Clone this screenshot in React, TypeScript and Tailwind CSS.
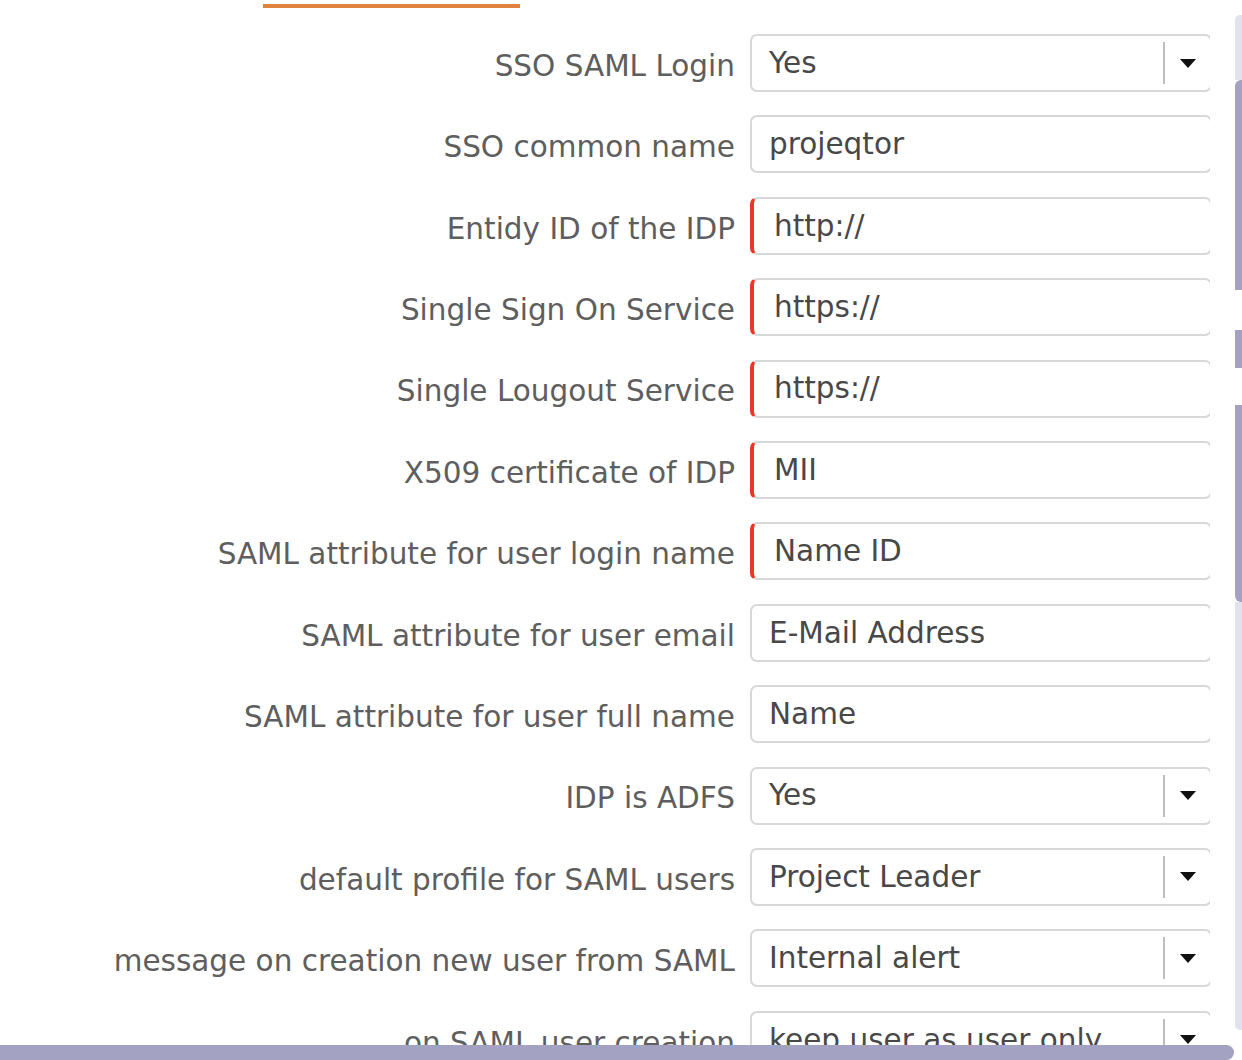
import React from "react";

type Field = {
  label: string;
  value: string;
  kind: "select" | "text";
  required?: boolean;
};

const fields: Field[] = [
  { label: "SSO SAML Login", value: "Yes", kind: "select" },
  { label: "SSO common name", value: "projeqtor", kind: "text" },
  { label: "Entidy ID of the IDP", value: "http://", kind: "text", required: true },
  { label: "Single Sign On Service", value: "https://", kind: "text", required: true },
  { label: "Single Lougout Service", value: "https://", kind: "text", required: true },
  { label: "X509 certificate of IDP", value: "MII", kind: "text", required: true },
  { label: "SAML attribute for user login name", value: "Name ID", kind: "text", required: true },
  { label: "SAML attribute for user email", value: "E-Mail Address", kind: "text" },
  { label: "SAML attribute for user full name", value: "Name", kind: "text" },
  { label: "IDP is ADFS", value: "Yes", kind: "select" },
  { label: "default profile for SAML users", value: "Project Leader", kind: "select" },
  { label: "message on creation new user from SAML", value: "Internal alert", kind: "select" },
  { label: "on SAML user creation", value: "keep user as user only", kind: "select" },
];

function Row({ f }: { f: Field }) {
  return (
    <div className="flex items-center h-[58px] shrink-0">
      <div className="w-[735px] shrink-0 text-right pt-[6px] text-[#5e5e5e] whitespace-nowrap">
        {f.label}
      </div>
      <div
        className={
          f.required
            ? "ml-[15px] w-[462px] h-[58px] shrink-0 flex items-center rounded-[7px] border-2 border-[#d8d8d8] border-l-[4px] border-l-[#e8382a] bg-white"
            : "ml-[15px] w-[462px] h-[58px] shrink-0 flex items-center rounded-[7px] border-2 border-[#d8d8d8] bg-white"
        }
      >
        <span className={f.required ? "pl-[20px] text-[#484848] whitespace-nowrap" : "pl-[17px] text-[#484848] whitespace-nowrap"}>
          {f.value}
        </span>
        {f.kind === "select" && (
          <div className="ml-auto flex items-center h-full">
            <div className="w-[2px] h-[42px] bg-[#bdbdbd]" />
            <div className="w-[45px] flex justify-center">
              <svg width="16" height="9" viewBox="0 0 16 9">
                <path d="M0 0 H16 L8 9 Z" fill="#111" />
              </svg>
            </div>
          </div>
        )}
      </div>
    </div>
  );
}

export default function App() {
  return (
    <div
      className="w-[1242px] h-[1060px] overflow-hidden bg-white text-[29.5px] flex flex-col"
      style={{ fontFamily: '"DejaVu Sans", Verdana, sans-serif' }}
    >
      <div className="flex h-[1045px] shrink-0">
        {/* form pane */}
        <div className="w-[1210px] shrink-0 overflow-hidden flex flex-col">
          <div className="ml-[263px] mt-[4px] w-[257px] h-[4px] bg-[#e0823f] shrink-0" />
          <div className="flex flex-col gap-[23.4px] pt-[26px]">
            {fields.map((f) => (
              <Row key={f.label} f={f} />
            ))}
          </div>
        </div>

        <div className="flex-1" />

        {/* vertical scrollbar */}
        <div className="w-[7px] shrink-0 flex flex-col pt-[15px]">
          <div className="h-[65px] bg-[#e2e1ee] rounded-tl-[5px]" />
          <div className="h-[210px] bg-[#a4a2c2] rounded-tl-[6px]" />
          <div className="h-[40px] bg-white" />
          <div className="h-[38px] bg-[#a4a2c2]" />
          <div className="h-[37px] bg-white" />
          <div className="h-[197px] bg-[#a4a2c2] rounded-bl-[6px]" />
          <div className="h-[428px] bg-[#e2e1ee] rounded-bl-[5px]" />
        </div>
      </div>

      {/* horizontal scrollbar */}
      <div className="w-[1234px] h-[15px] bg-[#a4a2c2] rounded-r-[8px] shrink-0" />
    </div>
  );
}
